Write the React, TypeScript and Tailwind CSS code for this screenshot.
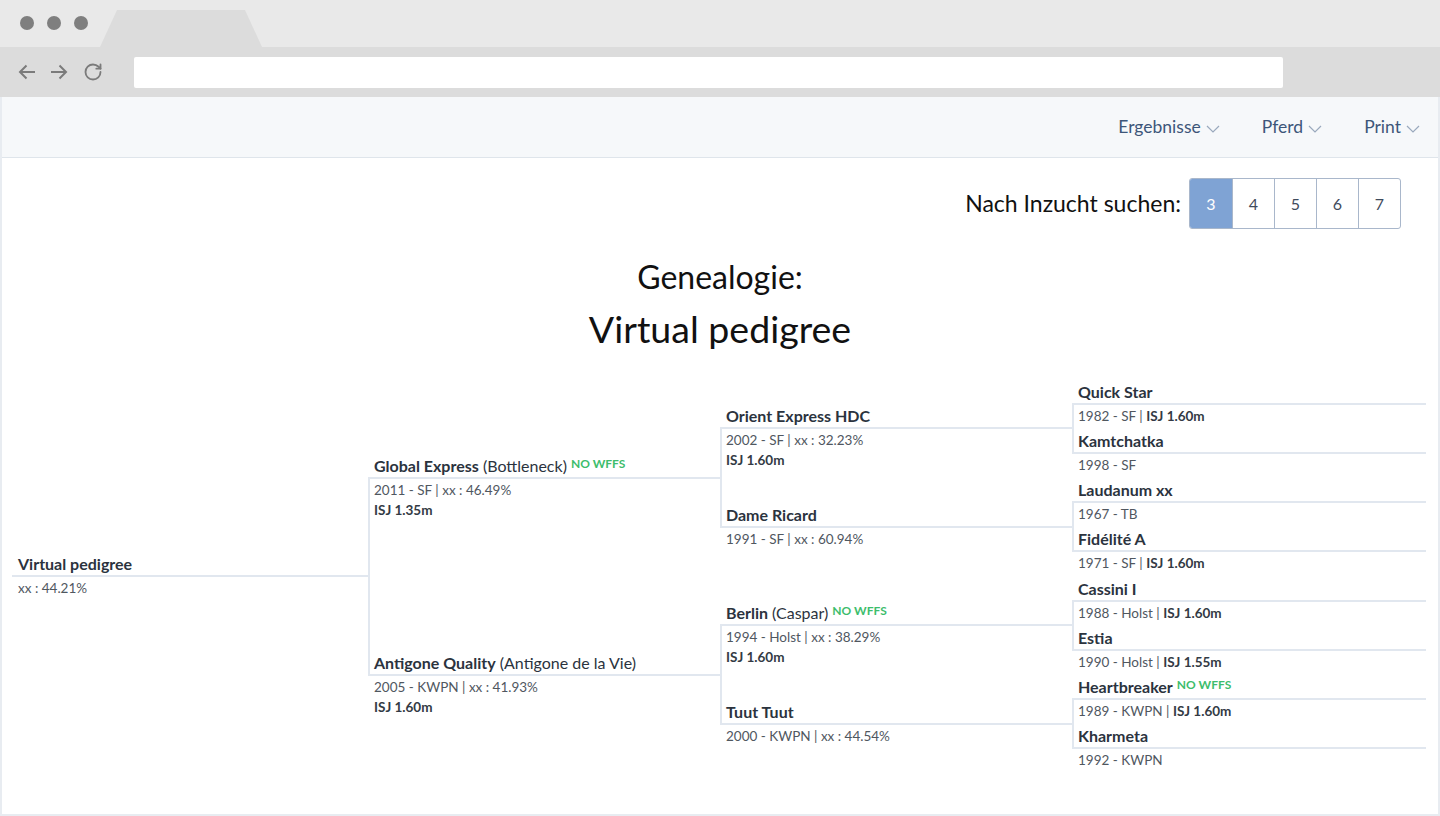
import React from 'react';
import { RotateCw } from 'lucide-react';

type Horse = {
  name: string;
  alias?: string;
  wffs?: boolean;
  info: string;
  isj?: string;
  inline?: boolean;
};

const root: Horse = { name: 'Virtual pedigree', info: 'xx : 44.21%' };

const parents: Horse[] = [
  { name: 'Global Express', alias: 'Bottleneck', wffs: true, info: '2011 - SF | xx : 46.49%', isj: 'ISJ 1.35m' },
  { name: 'Antigone Quality', alias: 'Antigone de la Vie', info: '2005 - KWPN | xx : 41.93%', isj: 'ISJ 1.60m' },
];

const grandParents: Horse[] = [
  { name: 'Orient Express HDC', info: '2002 - SF | xx : 32.23%', isj: 'ISJ 1.60m' },
  { name: 'Dame Ricard', info: '1991 - SF | xx : 60.94%' },
  { name: 'Berlin', alias: 'Caspar', wffs: true, info: '1994 - Holst | xx : 38.29%', isj: 'ISJ 1.60m' },
  { name: 'Tuut Tuut', info: '2000 - KWPN | xx : 44.54%' },
];

const greatGrandParents: Horse[] = [
  { name: 'Quick Star', info: '1982 - SF', isj: 'ISJ 1.60m', inline: true },
  { name: 'Kamtchatka', info: '1998 - SF' },
  { name: 'Laudanum xx', info: '1967 - TB' },
  { name: 'Fidélité A', info: '1971 - SF', isj: 'ISJ 1.60m', inline: true },
  { name: 'Cassini I', info: '1988 - Holst', isj: 'ISJ 1.60m', inline: true },
  { name: 'Estia', info: '1990 - Holst', isj: 'ISJ 1.55m', inline: true },
  { name: 'Heartbreaker', wffs: true, info: '1989 - KWPN', isj: 'ISJ 1.60m', inline: true },
  { name: 'Kharmeta', info: '1992 - KWPN' },
];

const HorseName = ({ horse, boxed }: { horse: Horse; boxed?: boolean }) => (
  <div
    className={`${boxed ? 'pl-[4px]' : 'pl-[6px]'} pb-[1px] text-[16px] leading-[21px] font-bold text-[#2b333e] whitespace-nowrap`}
  >
    {horse.name}
    {horse.alias && <span className="font-normal"> ({horse.alias})</span>}
    {horse.wffs && (
      <span className="ml-[4px] text-[12px] font-bold text-[#3dbd6c] align-[4px]">NO WFFS</span>
    )}
  </div>
);

const HorseInfo = ({ horse, boxed }: { horse: Horse; boxed?: boolean }) => (
  <div className={`${boxed ? 'pl-[4px]' : 'pl-[6px]'} pt-[1px] text-[13.5px] leading-[20px] text-[#50575f] whitespace-nowrap`}>
    <div>
      {horse.info}
      {horse.isj && horse.inline && (
        <>
          {' | '}
          <span className="font-bold text-[#333a44]">{horse.isj}</span>
        </>
      )}
    </div>
    {horse.isj && !horse.inline && <div className="font-bold text-[#333a44]">{horse.isj}</div>}
  </div>
);

const Pair = ({ sire, dam }: { sire: Horse; dam: Horse }) => (
  <div className="flex-1 min-h-0 flex flex-col">
    <div className="flex-1 min-h-0 flex flex-col justify-end">
      <HorseName horse={sire} />
    </div>
    <div className="flex-[2] min-h-0 flex flex-col justify-between border-l-2 border-y-2 border-[#e1e7ef]">
      <HorseInfo horse={sire} boxed />
      <HorseName horse={dam} boxed />
    </div>
    <div className="flex-1 min-h-0">
      <HorseInfo horse={dam} />
    </div>
  </div>
);

const Column = ({ horses, className }: { horses: Horse[]; className: string }) => {
  const pairs: [Horse, Horse][] = [];
  for (let i = 0; i < horses.length; i += 2) pairs.push([horses[i], horses[i + 1]]);
  return (
    <div className={`flex flex-col ${className}`}>
      {pairs.map(([s, d]) => (
        <Pair key={s.name} sire={s} dam={d} />
      ))}
    </div>
  );
};

const Chevron = () => (
  <svg width="14" height="8" viewBox="0 0 14 8" fill="none" className="mt-[3px]">
    <polyline points="1,1 7,7 13,1" stroke="#9aa9bd" strokeWidth="1.2" />
  </svg>
);

const BrowserChrome = () => (
  <div>
    <div className="h-[47px] bg-[#e9e9e9] flex items-start">
      <div className="flex gap-[13px] ml-[20px] mt-[16px]">
        <span className="w-[14px] h-[14px] rounded-full bg-[#7f7f7f]" />
        <span className="w-[14px] h-[14px] rounded-full bg-[#7f7f7f]" />
        <span className="w-[14px] h-[14px] rounded-full bg-[#7f7f7f]" />
      </div>
      <div className="ml-[12px] mt-[10px] h-[37px] w-[162px] bg-[#dcdcdc] [clip-path:polygon(10.5%_0,89.5%_0,100%_100%,0_100%)]" />
    </div>
    <div className="h-[50px] bg-[#dcdcdc] flex items-center">
      <svg width="18" height="16" viewBox="0 0 18 16" fill="none" className="ml-[18px]">
        <path d="M17 8H2M8.5 1.5L2 8l6.5 6.5" stroke="#7b7b7b" strokeWidth="2" />
      </svg>
      <svg width="18" height="16" viewBox="0 0 18 16" fill="none" className="ml-[14px]">
        <path d="M1 8h15M9.5 1.5L16 8l-6.5 6.5" stroke="#7b7b7b" strokeWidth="2" />
      </svg>
      <RotateCw size={20} strokeWidth={2.2} color="#7b7b7b" className="ml-[15px]" />
      <div className="ml-[31px] w-[1149px] h-[31px] bg-white rounded-[2px]" />
    </div>
  </div>
);

export default function App() {
  return (
    <div className="w-[1440px] h-[816px] bg-white font-['Lato',sans-serif] overflow-hidden">
      <BrowserChrome />
      <div className="h-[719px] border-x-2 border-b-2 border-[#e8ecf1] flex flex-col">
        <nav className="h-[61px] shrink-0 bg-[#f6f8fa] border-b border-[#dfe5eb] flex items-center justify-end gap-[42px] pr-[18px] text-[17.5px] text-[#3d5679]">
          {['Ergebnisse', 'Pferd', 'Print'].map((item) => (
            <div key={item} className="flex items-center gap-[5px]">
              <span>{item}</span>
              <Chevron />
            </div>
          ))}
        </nav>

        <div className="mt-[20px] flex items-center justify-end pr-[37px]">
          <span className="text-[23px] text-[#111] mr-[8px]">Nach Inzucht suchen:</span>
          <div className="flex h-[51px] border border-[#a9b7cb] rounded-[3px] overflow-hidden">
            {[3, 4, 5, 6, 7].map((n, i) => (
              <div
                key={n}
                className={`w-[42px] flex items-center justify-center text-[16px] ${
                  i === 0 ? 'bg-[#7fa3d4] text-white' : 'text-[#3f4b5c] border-l border-[#a9b7cb]'
                }`}
              >
                {n}
              </div>
            ))}
          </div>
        </div>

        <div className="mt-[29px] text-center text-[#111]">
          <h1 className="text-[32px] leading-[38px]">Genealogie:</h1>
          <h2 className="mt-[10px] text-[37.5px] leading-[46px]">Virtual pedigree</h2>
        </div>

        <div className="mt-[27px] h-[394px] flex pl-[10px] pr-[12px]">
          <div className="w-[356px] flex flex-col">
            <div className="flex-1 min-h-0 flex flex-col justify-end border-b-2 border-[#e1e7ef]">
              <HorseName horse={root} />
            </div>
            <div className="flex-1 min-h-0">
              <HorseInfo horse={root} />
            </div>
          </div>
          <Column horses={parents} className="w-[352px]" />
          <Column horses={grandParents} className="w-[352px]" />
          <Column horses={greatGrandParents} className="flex-1" />
        </div>
      </div>
    </div>
  );
}
